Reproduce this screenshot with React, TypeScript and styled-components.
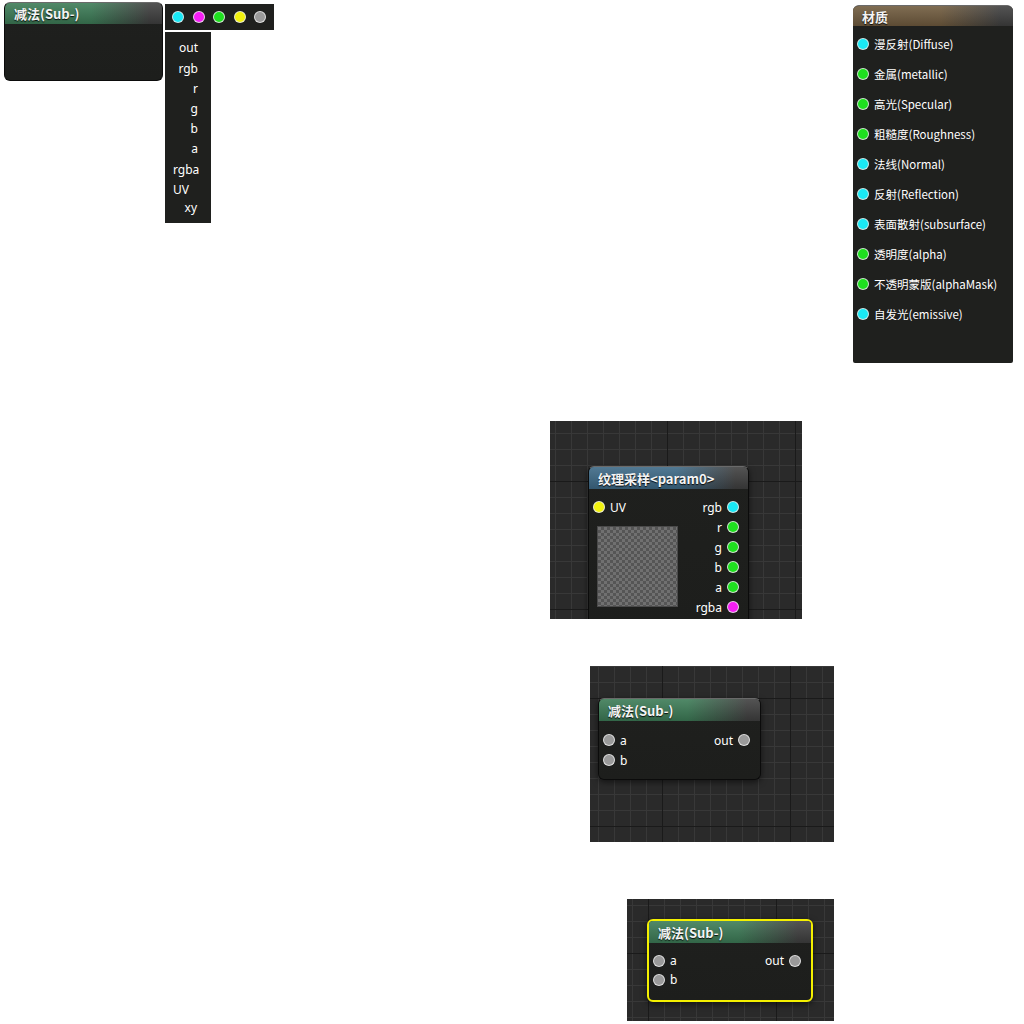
import React from "react";
import styled, { createGlobalStyle } from "styled-components";

const GlobalStyle = createGlobalStyle`
  html, body { margin: 0; padding: 0; background: #ffffff; }
  body {
    font-family: "Noto Sans", "Noto Sans CJK SC", sans-serif;
    font-size: 12px;
    color: #ffffff;
  }
  * { box-sizing: border-box; }
`;

const COLORS = {
  cyan: "#19e8f5",
  magenta: "#f51ef5",
  green: "#1fe01f",
  yellow: "#f2f20f",
  grey: "#9a9a9a",
};

const Page = styled.div`
  width: 1024px;
  height: 1024px;
  overflow: hidden;
  display: flex;
  flex-direction: column;
`;

const TopRow = styled.div`
  display: flex;
  align-items: flex-start;
  height: 363px;
`;

const NodeBox = styled.div<{ $selected?: boolean; $w: number; $flat?: boolean }>`
  width: ${(p) => p.$w}px;
  flex: none;
  background: linear-gradient(to bottom, #1f201e, #1d1e1c);
  border: ${(p) => (p.$selected ? "2px solid #f4f000" : "1px solid #0b0b0b")};
  border-top-color: ${(p) => (p.$selected ? "#f4f000" : "#6a6a6a")};
  border-radius: 6px;
  box-shadow: ${(p) => (p.$flat ? "none" : "0 2px 6px rgba(0, 0, 0, 0.55)")};
  overflow: hidden;
`;

const Header = styled.div<{ $hue: string; $h?: number }>`
  height: ${(p) => p.$h ?? 22}px;
  display: flex;
  align-items: center;
  padding-left: 9px;
  background: linear-gradient(to bottom, rgba(255, 255, 255, 0.1), rgba(0, 0, 0, 0.18)),
    linear-gradient(to right, ${(p) => p.$hue} 0%, ${(p) => p.$hue} 55%, #404040 92%);
  font-family: "Noto Sans CJK SC", "Noto Sans", sans-serif;
  font-weight: bold;
  font-size: 13px;
  color: #f4f4f4;
  text-shadow: 0 1px 1px rgba(0, 0, 0, 0.9);
  white-space: nowrap;
`;

const EmptyBody = styled.div<{ $h: number }>`
  height: ${(p) => p.$h}px;
`;

const Dot = styled.span<{ $c: string }>`
  display: inline-block;
  flex: none;
  width: 12px;
  height: 12px;
  border-radius: 50%;
  background: ${(p) => p.$c};
  border: 1px solid rgba(235, 235, 235, 0.85);
`;

const PaletteColumn = styled.div`
  display: flex;
  flex-direction: column;
  gap: 2px;
  margin: 4px 0 0 2px;
`;

const DotBar = styled.div`
  width: 109px;
  height: 26px;
  background: #1f201e;
  display: flex;
  align-items: center;
  gap: 8.5px;
  padding-left: 7px;
`;

const LabelList = styled.div`
  width: 46px;
  background: #1f201e;
  padding: 4px 13px 5px 8px;
  display: flex;
  flex-direction: column;
`;

const ListItem = styled.div<{ $h: number; $left?: boolean; $pr?: number }>`
  height: ${(p) => p.$h}px;
  line-height: ${(p) => p.$h}px;
  text-align: ${(p) => (p.$left ? "left" : "right")};
  padding-right: ${(p) => p.$pr ?? 0}px;
  font-size: 12px;
`;

const MaterialPanel = styled.div`
  width: 160px;
  height: 358px;
  margin: 5px 11px 0 auto;
  background: #1f201e;
  border-radius: 6px 6px 2px 2px;
  border-top: 1px solid #6a6a6a;
  overflow: hidden;
`;

const MaterialRows = styled.div`
  display: flex;
  flex-direction: column;
  padding-top: 3px;
`;

const MaterialRow = styled.div`
  height: 30px;
  display: flex;
  align-items: center;
  gap: 5px;
  padding-left: 4px;
  font-family: "Noto Sans CJK SC", "Noto Sans", sans-serif;
  font-size: 11.5px;
  white-space: nowrap;
`;

const Canvas = styled.div<{ $w: number; $h: number; $x: number; $y: number; $gx: number; $gy: number }>`
  width: ${(p) => p.$w}px;
  height: ${(p) => p.$h}px;
  flex: none;
  overflow: hidden;
  background-color: #2a2a2a;
  background-image: linear-gradient(to right, #1a1a1a 1px, transparent 1px),
    linear-gradient(to bottom, #1a1a1a 1px, transparent 1px),
    linear-gradient(to right, #383838 1px, transparent 1px),
    linear-gradient(to bottom, #383838 1px, transparent 1px);
  background-size: 128px 128px, 128px 128px, 16px 16px, 16px 16px;
  background-position: ${(p) => `${p.$gx}px ${p.$gy}px, ${p.$gx}px ${p.$gy}px, ${p.$gx % 16}px ${p.$gy % 16}px, ${p.$gx % 16}px ${p.$gy % 16}px`};
  padding: ${(p) => `${p.$y}px 0 0 ${p.$x}px`};
`;

const CanvasSlot = styled.div<{ $left: number; $top: number }>`
  margin-left: ${(p) => p.$left}px;
  margin-top: ${(p) => p.$top}px;
`;

const NodeBody = styled.div<{ $pt: number; $pb: number; $pr?: number }>`
  display: flex;
  justify-content: space-between;
  padding: ${(p) => `${p.$pt}px ${p.$pr ?? 10}px ${p.$pb}px 4px`};
`;

const PortColumn = styled.div<{ $right?: boolean }>`
  display: flex;
  flex-direction: column;
  align-items: ${(p) => (p.$right ? "flex-end" : "flex-start")};
`;

const Port = styled.div<{ $h?: number }>`
  height: ${(p) => p.$h ?? 20}px;
  display: flex;
  align-items: center;
  gap: 5px;
  font-size: 12px;
`;

const Preview = styled.div`
  width: 81px;
  height: 81px;
  margin: 9px 0 0 4px;
  border: 1px solid #4a4a4a;
  background-color: #707070;
  background-image: linear-gradient(45deg, #555 25%, transparent 25%, transparent 75%, #555 75%),
    linear-gradient(45deg, #555 25%, transparent 25%, transparent 75%, #555 75%);
  background-size: 6px 6px;
  background-position: 0 0, 3px 3px;
`;

type PortDef = { label: string; color: string };

const InPort: React.FC<{ p: PortDef; h?: number }> = ({ p, h }) => (
  <Port $h={h}>
    <Dot $c={p.color} />
    <span>{p.label}</span>
  </Port>
);

const OutPort: React.FC<{ p: PortDef; h?: number }> = ({ p, h }) => (
  <Port $h={h}>
    <span>{p.label}</span>
    <Dot $c={p.color} />
  </Port>
);

const SubNode: React.FC<{ selected?: boolean; w: number; rowH?: number }> = ({ selected, w, rowH = 20 }) => (
  <NodeBox $w={w} $selected={selected}>
    <Header $hue="#3d7c57">减法(Sub-)</Header>
    <NodeBody $pt={selected ? 8 : 9} $pb={selected ? 11 : 9}>
      <PortColumn>
        <InPort p={{ label: "a", color: COLORS.grey }} h={rowH} />
        <InPort p={{ label: "b", color: COLORS.grey }} h={rowH} />
      </PortColumn>
      <PortColumn $right>
        <OutPort p={{ label: "out", color: COLORS.grey }} h={rowH} />
      </PortColumn>
    </NodeBody>
  </NodeBox>
);

const textureOuts: PortDef[] = [
  { label: "rgb", color: COLORS.cyan },
  { label: "r", color: COLORS.green },
  { label: "g", color: COLORS.green },
  { label: "b", color: COLORS.green },
  { label: "a", color: COLORS.green },
  { label: "rgba", color: COLORS.magenta },
];

const materialRows: PortDef[] = [
  { label: "漫反射(Diffuse)", color: COLORS.cyan },
  { label: "金属(metallic)", color: COLORS.green },
  { label: "高光(Specular)", color: COLORS.green },
  { label: "粗糙度(Roughness)", color: COLORS.green },
  { label: "法线(Normal)", color: COLORS.cyan },
  { label: "反射(Reflection)", color: COLORS.cyan },
  { label: "表面散射(subsurface)", color: COLORS.cyan },
  { label: "透明度(alpha)", color: COLORS.green },
  { label: "不透明蒙版(alphaMask)", color: COLORS.green },
  { label: "自发光(emissive)", color: COLORS.cyan },
];

const listItems: { t: string; h: number; left?: boolean; pr?: number }[] = [
  { t: "out", h: 23 },
  { t: "rgb", h: 20 },
  { t: "r", h: 20 },
  { t: "g", h: 20 },
  { t: "b", h: 20 },
  { t: "a", h: 20 },
  { t: "rgba", h: 22 },
  { t: "UV", h: 17, left: true },
  { t: "xy", h: 20, pr: 1 },
];

export default function App() {
  return (
    <Page>
      <GlobalStyle />
      <TopRow>
        <CanvasSlot $left={4} $top={2}>
          <NodeBox $w={159} $flat>
            <Header $hue="#3d7c57" $h={21}>减法(Sub-)</Header>
            <EmptyBody $h={56} />
          </NodeBox>
        </CanvasSlot>
        <PaletteColumn>
          <DotBar>
            <Dot $c={COLORS.cyan} />
            <Dot $c={COLORS.magenta} />
            <Dot $c={COLORS.green} />
            <Dot $c={COLORS.yellow} />
            <Dot $c={COLORS.grey} />
          </DotBar>
          <LabelList>
            {listItems.map((it) => (
              <ListItem key={it.t} $h={it.h} $left={it.left} $pr={it.pr}>
                {it.t}
              </ListItem>
            ))}
          </LabelList>
        </PaletteColumn>
        <MaterialPanel>
          <Header $hue="#715c3f" $h={20}>材质</Header>
          <MaterialRows>
            {materialRows.map((r) => (
              <MaterialRow key={r.label}>
                <Dot $c={r.color} />
                <span>{r.label}</span>
              </MaterialRow>
            ))}
          </MaterialRows>
        </MaterialPanel>
      </TopRow>

      <CanvasSlot $left={550} $top={58}>
        <Canvas $w={252} $h={198} $x={38} $y={45} $gx={117} $gy={60}>
          <NodeBox $w={161}>
            <Header $hue="#3e6a87">纹理采样&lt;param0&gt;</Header>
            <NodeBody $pt={8} $pb={8} $pr={9}>
              <PortColumn>
                <InPort p={{ label: "UV", color: COLORS.yellow }} />
                <Preview />
              </PortColumn>
              <PortColumn $right>
                {textureOuts.map((o) => (
                  <OutPort key={o.label} p={o} />
                ))}
              </PortColumn>
            </NodeBody>
          </NodeBox>
        </Canvas>
      </CanvasSlot>

      <CanvasSlot $left={590} $top={47}>
        <Canvas $w={244} $h={176} $x={8} $y={32} $gx={72} $gy={32}>
          <SubNode w={163} />
        </Canvas>
      </CanvasSlot>

      <CanvasSlot $left={627} $top={57}>
        <Canvas $w={207} $h={122} $x={20} $y={20} $gx={21} $gy={54}>
          <SubNode w={166} selected rowH={19} />
        </Canvas>
      </CanvasSlot>
    </Page>
  );
}
